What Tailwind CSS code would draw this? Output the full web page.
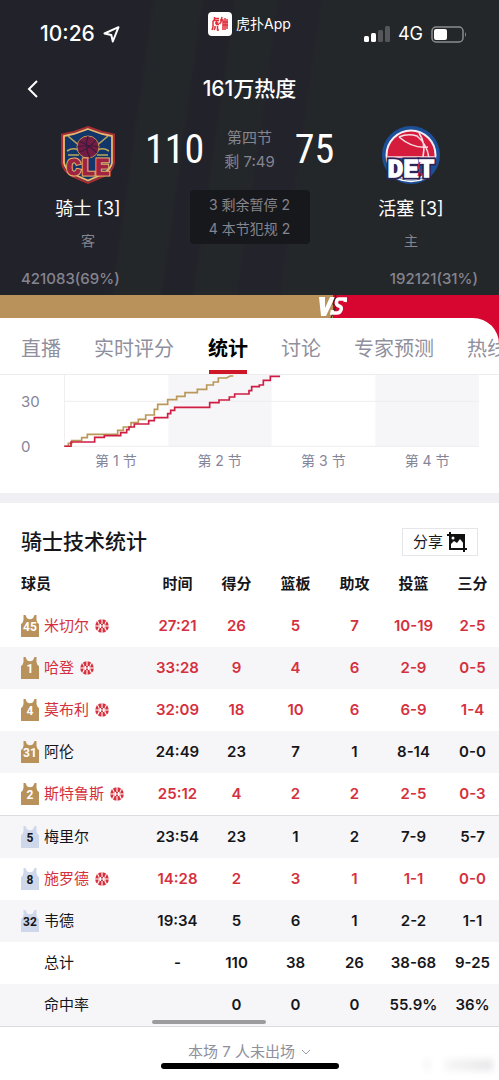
<!DOCTYPE html>
<html lang="zh-CN">
<head>
  <meta charset="UTF-8" />
  <meta name="viewport" content="width=device-width, initial-scale=1.0"/>
  <title>骑士 vs 活塞 - 统计</title>
  <script src="https://cdn.jsdelivr.net/npm/@tailwindcss/browser@4"></script>
</head>
<body class="bg-white text-[#16161a] font-['Inter','Noto_Sans_CJK_SC',sans-serif]">
  <svg class="hidden">
    <symbol id="jersey" viewBox="0 0 18 22">
      <path d="M2.500 0H4.500L6 3.200Q9 5.200 12 3.200L13.500 0H15.500V5Q16 8 18 9V22H0V9Q2 8 2.500 5Z"/>
    </symbol>
    <symbol id="ball" viewBox="0 0 14 14">
      <circle cx="7" cy="7" r="6.800" fill="#d5303d"/>
      <path d="M7 0V5M7 9V14M0 7H4M10 7H14M2.500 2Q6.200 7 2.500 12M11.500 2Q7.800 7 11.500 12M5.500 5V9M8.500 5V9M5.500 7H8.500" fill="none" stroke="#fff" stroke-width="1.100"/>
    </symbol>
  </svg>

  <header class="bg-[#23252a] bg-[linear-gradient(98deg,#22222b_0%,#22222b_28%,#24272a_29%,#24272a_37%,#22222a_38%,#22222a_43%,#24272a_44%,#24272a_51%,#23232c_52%,#23232c_59%,#24272a_60%)] text-white h-[295px] flex flex-col">
    <!-- Status bar -->
    <div class="h-[68px] shrink-0 grid grid-cols-[1fr_auto_1fr] items-center px-8">
      <div class="flex items-center gap-2 pl-2 text-[21px] font-medium">
        <span>10:26</span>
        <svg class="w-[17px] h-[17px]" viewBox="0 0 17 17" fill="none" stroke="#fff" stroke-width="2" stroke-linejoin="round"><path d="M1.500 7.500L15.500 1.200L9.800 15.500L8.300 9Z"/></svg>
      </div>
      <div class="flex items-center gap-1 pb-5 text-sm">
        <svg class="w-6 h-6" viewBox="0 0 24 24">
          <rect width="24" height="24" rx="4" fill="#fff"/>
          <path d="M6.500 5V8M6.500 6.500H11M5 8.500H11M5 8.500V15L4 18M7 11H10.500M8.500 8.500V12.500H11M7 14V16L6 18M9.500 14V18H11M14 5L13 10L11.500 12M12 8H15V18M17 6V18M15.500 10H20M15.500 13H20M19 7V17" fill="none" stroke="#e0303c" stroke-width="1.500"/>
        </svg>
        <span>虎扑App</span>
      </div>
      <div class="flex items-center justify-end gap-2 text-lg">
        <svg class="w-[26px] h-4" viewBox="0 0 26 16">
          <rect x="0" y="10" width="5" height="6" rx="1.500" fill="#fff"/>
          <rect x="7" y="7" width="5" height="9" rx="1.500" fill="#fff"/>
          <rect x="14" y="4" width="5" height="12" rx="1.500" fill="#54565a"/>
          <rect x="21" y="0" width="5" height="16" rx="1.500" fill="#54565a"/>
        </svg>
        <span>4G</span>
        <svg class="w-9 h-[17px]" viewBox="0 0 36 17">
          <rect x="1" y="1" width="31" height="15" rx="4" fill="none" stroke="#8b8c90" stroke-width="1.500"/>
          <rect x="3" y="3" width="13" height="11" rx="2" fill="#fff"/>
          <path d="M34 6Q36 8.500 34 11Z" fill="#8b8c90"/>
        </svg>
      </div>
    </div>

    <div class="h-[42px] shrink-0 grid grid-cols-[1fr_auto_1fr] items-center px-[27px]">
      <button type="button" aria-label="返回" class="w-3 h-[18px]">
        <svg class="w-3 h-[18px]" viewBox="0 0 12 18" fill="none" stroke="#fff" stroke-width="2"><path d="M10 1L2 9L10 17"/></svg>
      </button>
      <h1 class="text-[21px] font-medium">161万热度</h1>
    </div>

    <!-- Teams and score -->
    <div class="grid grid-cols-[100px_1fr_100px] px-[38px] pt-[15px]">
      <div class="flex flex-col items-center">
        <svg class="w-[58px] h-[60px]" viewBox="0 0 58 60">
          <path d="M29 2L43 7L55 9.500V38Q54 46 45 51L29 58L13 51Q4 46 3 38V9.500L15 7Z" fill="#12366a" stroke="#a82d33" stroke-width="2"/>
          <path d="M29 4L43 9L53 11V38Q52 44 44 49L29 55.500L14 49Q6 44 5 38V11L15 9Z" fill="none" stroke="#f0b86c" stroke-width="1.800"/>
          <path d="M9 11L30 29M49 11L28 29M8 26Q14 22 19 25T30 30M50 26Q44 22 39 25T28 30M9 30H20M49 30H38" fill="none" stroke="#b8a65c" stroke-width="1.600"/>
          <circle cx="29" cy="22" r="11" fill="#731c44" stroke="#c09554" stroke-width="1"/>
          <path d="M20 16Q30 20 38 28M29 11Q25 22 31 33M20 27Q29 25 37 15M18.500 22Q29 19 39.500 22" fill="none" stroke="#3b1a3c" stroke-width="1.200"/>
          <text x="29" y="50" text-anchor="middle" font-family="Liberation Mono" font-weight="700" font-size="24" fill="#e9b267" stroke="#e9b267" stroke-width="3">CLE</text>
          <text x="29" y="50" text-anchor="middle" font-family="Liberation Mono" font-weight="700" font-size="24" fill="#9e2242" stroke="#9e2242" stroke-width="1">CLE</text>
        </svg>
        <div class="mt-3 leading-6 text-lg">骑士 [3]</div>
        <div class="mt-2 leading-6 text-sm text-[#85858f]">客</div>
      </div>
      <div class="flex flex-col items-center">
        <div class="w-full grid grid-cols-[1fr_auto_1fr] items-center gap-5 text-[15px] text-[#85858f]">
          <div class="text-right text-[40px] leading-[50px] text-white font-['Liberation_Sans_Narrow','Roboto_Condensed','Roboto',sans-serif]">110</div>
          <div class="text-center leading-6">第四节<br>剩 7:49</div>
          <div class="text-[40px] leading-[50px] text-white font-['Liberation_Sans_Narrow','Roboto_Condensed','Roboto',sans-serif]">75</div>
        </div>
        <div class="mt-[15px] w-[120px] py-[3px] rounded-sm bg-[#17181b] text-center text-sm leading-6 text-[#85858f]">3 剩余暂停 2<br>4 本节犯规 2</div>
      </div>
      <div class="flex flex-col items-center">
        <svg class="w-[60px] h-[60px]" viewBox="0 0 60 60">
          <circle cx="30" cy="30" r="29" fill="#1c4f97"/>
          <circle cx="30" cy="30" r="25.500" fill="#f4eef2"/>
          <circle cx="30" cy="30" r="23.500" fill="#d51c3c"/>
          <path d="M18 12Q32 24 47 22M38 8Q45 18 42 32M18 12Q27 8 36 11Q46 19 48 33M7 32H53" fill="none" stroke="#f6dfe4" stroke-width="1.600"/>
          <path d="M7 33H53V48H7Z" fill="#1c4f97"/>
          <path d="M15 53Q30 60 45 53" fill="none" stroke="#fff" stroke-width="1.500"/>
          <text x="30" y="52" text-anchor="middle" font-family="Liberation Mono" font-weight="700" font-size="26" fill="#2b2458" stroke="#2b2458" stroke-width="5">DET</text>
          <text x="30" y="52" text-anchor="middle" font-family="Liberation Mono" font-weight="700" font-size="26" fill="#fff" stroke="#fff" stroke-width="1.500">DET</text>
          <path d="M39 37L37 42L39 45L37 51" fill="none" stroke="#d51c3c" stroke-width="1.300"/>
        </svg>
        <div class="mt-3 leading-6 text-lg">活塞 [3]</div>
        <div class="mt-2 leading-6 text-sm text-[#85858f]">主</div>
      </div>
    </div>

    <div class="mt-auto flex justify-between px-[21px] pb-[6px] text-[15px] leading-5 font-medium text-[#85858f]">
      <span>421083(69%)</span>
      <span>192121(31%)</span>
    </div>
  </header>

  <div class="bg-[#d60630]">
    <!-- Support bar -->
    <div class="relative h-[23px]">
      <div class="h-full w-2/3 bg-[#b9925b]"></div>
      <svg class="absolute left-2/3 top-0 -translate-x-1/2 w-7 h-[23px]" viewBox="0 0 28 23">
        <path d="M0 2H6L6 13L11 2H16L7 21H2Z" fill="#fff"/>
        <path d="M17 0L14 9L17 11L12 23" fill="none" stroke="#3a2a22" stroke-width="1.200"/>
        <path d="M26 7L26.500 4H20Q18 4 17.500 7T20 11Q23 12 22 15T18 18H13L13.500 15" fill="none" stroke="#fff" stroke-width="3.500"/>
      </svg>
    </div>

    <main class="bg-white rounded-tr-[26px] overflow-hidden">
      <nav class="h-[57px] flex gap-[33px] pl-[21px] pt-[17px] text-xl leading-7 text-[#8f8f9d] whitespace-nowrap border-b border-[#ededf0] overflow-hidden">
        <a href="#live">直播</a>
        <a href="#rating">实时评分</a>
        <a href="#stats" aria-current="page" class="relative ml-px font-bold text-black after:absolute after:left-px after:right-px after:bottom-0 after:h-1 after:bg-[#cf1626]">统计</a>
        <a href="#talk">讨论</a>
        <a href="#expert">专家预测</a>
        <a href="#hot">热线</a>
      </nav>

      <!-- Score trend -->
      <section class="flex pr-5 h-[118px] text-[#85859a]">
        <div class="w-16 shrink-0 pl-[21px] pt-[18px] flex flex-col gap-[27px] text-[15px] leading-[18px]">
          <span>30</span>
          <span>0</span>
        </div>
        <div class="flex-1">
          <svg class="w-full h-[72px]" viewBox="192 255 1245 216" preserveAspectRatio="none" fill="none">
            <path d="M505 255H815V469H505ZM1126 255H1437V469H1126Z" fill="#f6f6f8"/>
            <path d="M193 255V469H1437M193 334H1437" stroke="#ededf0" stroke-width="3"/>
            <path d="M193 469H205V460H215V452H245V443H262V433H353V421H370V411H393V398H415V388H437V375H463V358H473V343H503V329H530V319H555V308H592V298H620V285H640V276H655V264H680L690 258H700" stroke="#b99859" stroke-width="5"/>
            <path d="M193 469H213V456H284V442H313V437H362V428H380V419H387V411H403V402H446V392H463V383H503V371H512V361H524V352H629V338H657V330H688V321H704V312H747V302H755V290H778V285H790V271H811V259H840" stroke="#cf1d43" stroke-width="5"/>
          </svg>
          <div class="grid grid-cols-4 text-center text-sm leading-7">
            <span>第 1 节</span>
            <span>第 2 节</span>
            <span>第 3 节</span>
            <span>第 4 节</span>
          </div>
        </div>
      </section>

      <div class="h-[10px] bg-[#f0f0f4]"></div>

      <section class="pt-[25px]">
        <div class="flex items-center justify-between px-[21px] h-7">
          <h2 class="text-[21px] font-medium">骑士技术统计</h2>
          <button type="button" class="w-[76px] h-7 flex items-center justify-center gap-1 border border-[#e6e6ea] text-[15px]">
            <span>分享</span>
            <svg class="w-5 h-5" viewBox="0 0 20 20" fill="none" stroke="#111" stroke-width="2">
              <path d="M3 0V17H20M0 3H17V20"/>
              <path d="M3 3H17V12L13 7L10 11L7 9L3 13Z" fill="#111" stroke="none"/>
              <circle cx="6" cy="6" r="1.500" fill="#fff" stroke="none"/>
            </svg>
          </button>
        </div>

        <div class="relative mt-[7px] overflow-hidden border-b border-[#dcdce0]">
          <table class="table-fixed w-full min-w-[502px] text-center text-[15px] whitespace-nowrap">
            <thead>
              <tr class="h-[42px]">
                <th class="w-[148px] pl-[21px] text-left font-bold">球员</th>
                <th class="font-bold">时间</th>
                <th class="font-bold">得分</th>
                <th class="font-bold">篮板</th>
                <th class="font-bold">助攻</th>
                <th class="font-bold">投篮</th>
                <th class="font-bold">三分</th>
              </tr>
            </thead>
            <tbody id="stats"></tbody>
          </table>
          <div class="absolute left-[152px] bottom-[2px] w-[114px] h-1 rounded-full bg-[#9c9c9f]"></div>
        </div>
      </section>

      <footer class="relative pt-[14px] pb-[10px] flex flex-col items-center">
        <button type="button" class="flex items-center gap-[6px] text-[15px] leading-[22px] text-[#8f8f9d]">
          <span>本场 7 人未出场</span>
          <svg class="w-[10px] h-[6px]" viewBox="0 0 10 6" fill="none" stroke="#9a9aa6"><path d="M1 1L5 5L9 1"/></svg>
        </button>
        <div class="w-[178px] h-[6px] rounded-full bg-black"></div>
        <div class="absolute right-[6px] bottom-2 flex gap-4 blur-[3px]">
          <div class="w-1 h-3 bg-[#f0f0f1]"></div>
          <div class="w-12 h-3 bg-linear-to-r from-[#f6f6f6] to-[#e8e8ea]"></div>
        </div>
      </footer>
    </main>
  </div>

  <script>
    // number, name, hot, stats
    const players = [
      [45, "米切尔", true, ["27:21", "26", "5", "7", "10-19", "2-5"]],
      [1, "哈登", true, ["33:28", "9", "4", "6", "2-9", "0-5"]],
      [4, "莫布利", true, ["32:09", "18", "10", "6", "6-9", "1-4"]],
      [31, "阿伦", false, ["24:49", "23", "7", "1", "8-14", "0-0"]],
      [2, "斯特鲁斯", true, ["25:12", "4", "2", "2", "2-5", "0-3"]],
      [5, "梅里尔", false, ["23:54", "23", "1", "2", "7-9", "5-7"]],
      [8, "施罗德", true, ["14:28", "2", "3", "1", "1-1", "0-0"]],
      [32, "韦德", false, ["19:34", "5", "6", "1", "2-2", "1-1"]],
      [null, "总计", false, ["-", "110", "38", "26", "38-68", "9-25"]],
      [null, "命中率", false, ["", "0", "0", "0", "55.9%", "36%"]]
    ];

    const tbody = document.getElementById("stats");
    players.forEach(([num, name, hot, stats], i) => {
      const tr = tbody.insertRow();
      // line between starters and bench
      const height = i === 5 ? "h-[43px] border-t border-[#dcdce0]" : "h-[42px]";
      tr.className = `${height} even:bg-[#f6f6f9] ${hot ? "text-[#d5303d]" : ""}`;

      const starter = i < 5;
      const jersey = num === null ? "" : `
        <svg class="w-[18px] h-[22px] col-start-1 row-start-1 ${starter ? "fill-[#b9925b]" : "fill-[#cfd8ea]"}"><use href="#jersey"/></svg>
        <span class="col-start-1 row-start-1 pt-[2px] text-center text-xs font-bold font-['Roboto',sans-serif] ${starter ? "text-white" : "text-[#16161a]"}">${num}</span>`;
      const ball = hot ? '<svg class="w-[14px] h-[14px]"><use href="#ball"/></svg>' : "";

      tr.innerHTML = `
        <th class="pl-[21px] font-normal">
          <div class="flex items-center gap-[6px]">
            <span class="w-[17px] grid items-center justify-items-center">${jersey}</span>
            <span>${name}</span>${ball}
          </div>
        </th>` + stats.map(s => `<td class="font-semibold">${s}</td>`).join("");
    });
  </script>
</body>
</html>
